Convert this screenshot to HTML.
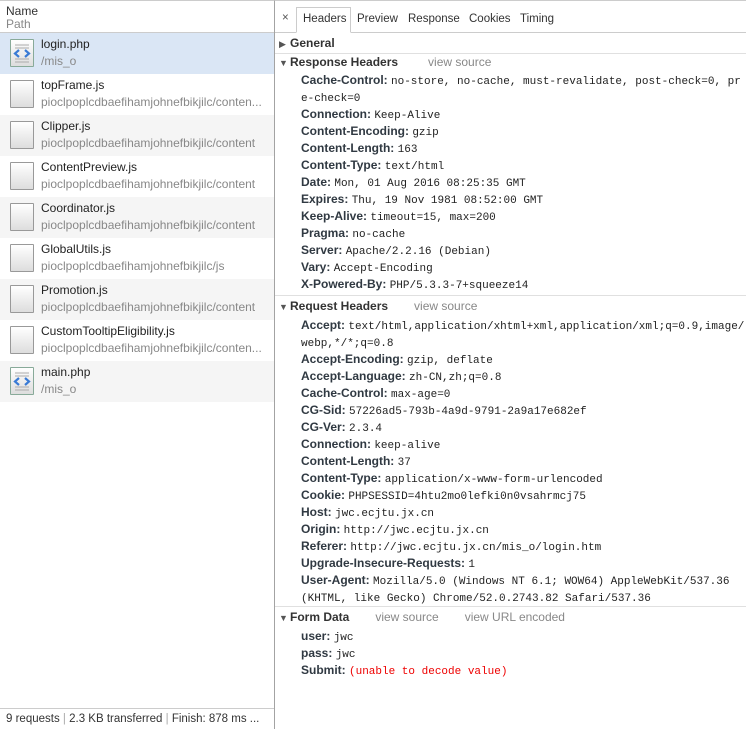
<!DOCTYPE html>
<html><head><meta charset="utf-8"><style>
*{margin:0;padding:0;box-sizing:border-box}
body{width:746px;height:729px;position:relative;overflow:hidden;background:#fff;font-family:"Liberation Sans",sans-serif;font-size:12px;color:#333}
#left{position:absolute;left:0;top:0;width:275px;height:729px;border-right:1px solid #a3a3a3;border-top:1px solid #ccc}
.hd{position:absolute;left:0;top:0;width:274px;height:32px;border-bottom:1px solid #ccc}
.hd div{position:absolute;left:6px;font-size:12px}
.row{position:absolute;left:0;width:274px;height:41px}
.row.g{background:#f5f5f5}.row.s{background:#dae6f5}
.ic{position:absolute;left:10px;top:6px;width:24px;height:28px;border:1px solid #999;background:linear-gradient(#fff,#ddd);border-radius:1px}
.n{position:absolute;left:41px;top:4px;color:#222}
.p{position:absolute;left:41px;top:21px;color:#888;white-space:nowrap}
.foot{position:absolute;left:0;top:707px;width:274px;height:22px;border-top:1px solid #ccc;background:#fff;font-size:11.5px;padding:4px 0 0 6px;color:#333;white-space:nowrap}
#right{position:absolute;left:275px;top:0;right:0;height:729px;border-top:1px solid #ccc}
.tabs{position:absolute;left:0;top:0;right:0;height:32px;border-bottom:1px solid #ccc}
.tab{position:absolute;top:12px;color:#333;font-size:11.5px}
.sel{position:absolute;left:21px;top:6px;width:55px;height:26px;border:1px solid #ccc;border-bottom:1px solid #fff;background:#fff}
.l{position:absolute;white-space:nowrap;height:17px;line-height:17px}
.t{font-weight:bold;color:#333;left:15px}
.k{font-weight:bold;color:#303942;left:26px}
.v{font-family:"Liberation Mono",monospace;font-size:11px;font-weight:normal;color:#222}
.vs{font-weight:normal;color:#888;margin-left:26px}
.tri{position:absolute;left:4px;font-size:9px;color:#555}
.sep{position:absolute;left:0;right:0;height:1px;background:#e0e0e0}
</style></head><body>
<div id="left">
<div class="hd"><div style="top:3px">Name</div><div style="top:16px;color:#888">Path</div></div>
<div class="row s" style="top:32px"><div class="ic" style="border-color:#8a9"><svg width="22" height="26" style="position:absolute;left:0;top:0"><g stroke="#aaa"><line x1="4" y1="5" x2="18" y2="5"/><line x1="4" y1="8" x2="18" y2="8"/><line x1="4" y1="19" x2="18" y2="19"/><line x1="4" y1="22" x2="18" y2="22"/></g><path d="M8 10 L4 13.5 L8 17 M14 10 L18 13.5 L14 17" stroke="#3a7bd5" stroke-width="2.2" fill="none"/></svg></div><div class="n">login.php</div><div class="p">/mis_o</div></div>
<div class="row" style="top:73px"><div class="ic"></div><div class="n">topFrame.js</div><div class="p">pioclpoplcdbaefihamjohnefbikjilc/conten...</div></div>
<div class="row g" style="top:114px"><div class="ic"></div><div class="n">Clipper.js</div><div class="p">pioclpoplcdbaefihamjohnefbikjilc/content</div></div>
<div class="row" style="top:155px"><div class="ic"></div><div class="n">ContentPreview.js</div><div class="p">pioclpoplcdbaefihamjohnefbikjilc/content</div></div>
<div class="row g" style="top:196px"><div class="ic"></div><div class="n">Coordinator.js</div><div class="p">pioclpoplcdbaefihamjohnefbikjilc/content</div></div>
<div class="row" style="top:237px"><div class="ic"></div><div class="n">GlobalUtils.js</div><div class="p">pioclpoplcdbaefihamjohnefbikjilc/js</div></div>
<div class="row g" style="top:278px"><div class="ic"></div><div class="n">Promotion.js</div><div class="p">pioclpoplcdbaefihamjohnefbikjilc/content</div></div>
<div class="row" style="top:319px"><div class="ic"></div><div class="n">CustomTooltipEligibility.js</div><div class="p">pioclpoplcdbaefihamjohnefbikjilc/conten...</div></div>
<div class="row g" style="top:360px"><div class="ic" style="border-color:#8a9"><svg width="22" height="26" style="position:absolute;left:0;top:0"><g stroke="#aaa"><line x1="4" y1="5" x2="18" y2="5"/><line x1="4" y1="8" x2="18" y2="8"/><line x1="4" y1="19" x2="18" y2="19"/><line x1="4" y1="22" x2="18" y2="22"/></g><path d="M8 10 L4 13.5 L8 17 M14 10 L18 13.5 L14 17" stroke="#3a7bd5" stroke-width="2.2" fill="none"/></svg></div><div class="n">main.php</div><div class="p">/mis_o</div></div>
<div class="foot">9 requests <span style="color:#aaa">|</span> 2.3 KB transferred <span style="color:#aaa">|</span> Finish: 878 ms ...</div>
</div>
<div id="right">
<div class="tabs"><div class="sel"></div>
<div class="tab" style="left:7px;top:11px;color:#555">×</div>
<div class="tab" style="left:28px">Headers</div><div class="tab" style="left:82px">Preview</div><div class="tab" style="left:133px">Response</div><div class="tab" style="left:194px">Cookies</div><div class="tab" style="left:245px">Timing</div></div>
<div class="tri" style="top:38px">▶</div><div class="l t" style="top:34px">General</div>
<div class="sep" style="top:52px"></div>
<div class="tri" style="top:57px">▼</div><div class="l t" style="top:53px">Response Headers<span class="vs" style="margin-left:30px">view source</span></div>
<div class="l k" style="top:71px">Cache-Control: <span class="v">no-store, no-cache, must-revalidate, post-check=0, pr</span></div>
<div class="l k" style="top:88px"><span class="v">e-check=0</span></div>
<div class="l k" style="top:105px">Connection: <span class="v">Keep-Alive</span></div>
<div class="l k" style="top:122px">Content-Encoding: <span class="v">gzip</span></div>
<div class="l k" style="top:139px">Content-Length: <span class="v">163</span></div>
<div class="l k" style="top:156px">Content-Type: <span class="v">text/html</span></div>
<div class="l k" style="top:173px">Date: <span class="v">Mon, 01 Aug 2016 08:25:35 GMT</span></div>
<div class="l k" style="top:190px">Expires: <span class="v">Thu, 19 Nov 1981 08:52:00 GMT</span></div>
<div class="l k" style="top:207px">Keep-Alive: <span class="v">timeout=15, max=200</span></div>
<div class="l k" style="top:224px">Pragma: <span class="v">no-cache</span></div>
<div class="l k" style="top:241px">Server: <span class="v">Apache/2.2.16 (Debian)</span></div>
<div class="l k" style="top:258px">Vary: <span class="v">Accept-Encoding</span></div>
<div class="l k" style="top:275px">X-Powered-By: <span class="v">PHP/5.3.3-7+squeeze14</span></div>
<div class="sep" style="top:294px"></div>
<div class="tri" style="top:301px">▼</div><div class="l t" style="top:297px">Request Headers<span class="vs">view source</span></div>
<div class="l k" style="top:316px">Accept: <span class="v">text/html,application/xhtml+xml,application/xml;q=0.9,image/</span></div>
<div class="l k" style="top:333px"><span class="v">webp,*/*;q=0.8</span></div>
<div class="l k" style="top:350px">Accept-Encoding: <span class="v">gzip, deflate</span></div>
<div class="l k" style="top:367px">Accept-Language: <span class="v">zh-CN,zh;q=0.8</span></div>
<div class="l k" style="top:384px">Cache-Control: <span class="v">max-age=0</span></div>
<div class="l k" style="top:401px">CG-Sid: <span class="v">57226ad5-793b-4a9d-9791-2a9a17e682ef</span></div>
<div class="l k" style="top:418px">CG-Ver: <span class="v">2.3.4</span></div>
<div class="l k" style="top:435px">Connection: <span class="v">keep-alive</span></div>
<div class="l k" style="top:452px">Content-Length: <span class="v">37</span></div>
<div class="l k" style="top:469px">Content-Type: <span class="v">application/x-www-form-urlencoded</span></div>
<div class="l k" style="top:486px">Cookie: <span class="v">PHPSESSID=4htu2mo0lefki0n0vsahrmcj75</span></div>
<div class="l k" style="top:503px">Host: <span class="v">jwc.ecjtu.jx.cn</span></div>
<div class="l k" style="top:520px">Origin: <span class="v">http://jwc.ecjtu.jx.cn</span></div>
<div class="l k" style="top:537px">Referer: <span class="v">http://jwc.ecjtu.jx.cn/mis_o/login.htm</span></div>
<div class="l k" style="top:554px">Upgrade-Insecure-Requests: <span class="v">1</span></div>
<div class="l k" style="top:571px">User-Agent: <span class="v">Mozilla/5.0 (Windows NT 6.1; WOW64) AppleWebKit/537.36</span></div>
<div class="l k" style="top:588px"><span class="v"> (KHTML, like Gecko) Chrome/52.0.2743.82 Safari/537.36</span></div>
<div class="sep" style="top:605px"></div>
<div class="tri" style="top:612px">▼</div><div class="l t" style="top:608px">Form Data<span class="vs">view source</span><span class="vs">view URL encoded</span></div>
<div class="l k" style="top:627px">user: <span class="v">jwc</span></div>
<div class="l k" style="top:644px">pass: <span class="v">jwc</span></div>
<div class="l k" style="top:661px">Submit: <span class="v" style="color:#e00">(unable to decode value)</span></div>
</div>
</body></html>
